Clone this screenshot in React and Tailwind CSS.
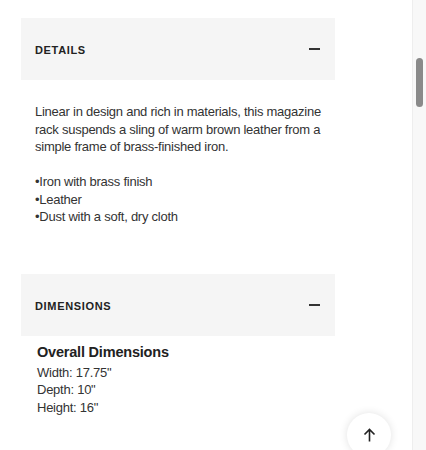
import React from "react";

function MinusIcon() {
  return <span className="block w-[11px] h-[2px] bg-[#333]" />;
}

function SectionHeader({ title }) {
  return (
    <div className="flex items-center justify-between bg-[#f5f5f5] h-[62px] pl-[14px] pr-[15px]">
      <span className="pt-[3px] text-[11px] font-bold tracking-[0.06em] text-[#222]">{title}</span>
      <MinusIcon />
    </div>
  );
}

export default function App() {
  return (
    <div
      className="flex h-[450px] w-[426px] overflow-hidden bg-white text-[#333]"
      style={{ fontFamily: '"Liberation Sans", Arial, sans-serif' }}
    >
      <div className="relative flex-1">
        <div className="w-[314px] ml-[21px] pt-[18px]">
          {/* Details */}
          <SectionHeader title="DETAILS" />
          <div className="px-[14px] pt-[23px] text-[13px] leading-[17.5px] tracking-[-0.25px]">
            <p>
              Linear in design and rich in materials, this magazine rack suspends a sling of warm
              brown leather from a simple frame of brass-finished iron.
            </p>
            <ul className="mt-[17.5px]">
              <li>•Iron with brass finish</li>
              <li>•Leather</li>
              <li>•Dust with a soft, dry cloth</li>
            </ul>
          </div>

          {/* Dimensions */}
          <div className="mt-[48px]">
            <SectionHeader title="DIMENSIONS" />
            <div className="px-[16px] pt-[6px]">
              <h3 className="text-[14.5px] font-bold text-[#222] leading-[20px] tracking-[-0.2px]">Overall Dimensions</h3>
              <div className="mt-[2px] text-[13px] leading-[17.5px] tracking-[-0.25px]">
                <div>Width: 17.75"</div>
                <div>Depth: 10"</div>
                <div>Height: 16"</div>
              </div>
            </div>
          </div>
        </div>

        {/* back to top */}
        <button className="absolute left-[347px] top-[413px] w-[44px] h-[44px] rounded-full bg-white shadow-[0_0_8px_rgba(0,0,0,0.12)] flex items-center justify-center">
          <svg width="13" height="14" viewBox="0 0 13 14" fill="none" stroke="#222" strokeWidth="1.6">
            <path d="M6.5 13.5V1.5M1.5 6.5l5-5 5 5" />
          </svg>
        </button>
      </div>

      {/* scrollbar */}
      <div className="w-[14px] bg-[#f8f8f8] border-l border-[#eee] pt-[58px] pl-[3px]">
        <div className="w-[7px] h-[49px] rounded-full bg-[#8a8a8a]" />
      </div>
    </div>
  );
}
